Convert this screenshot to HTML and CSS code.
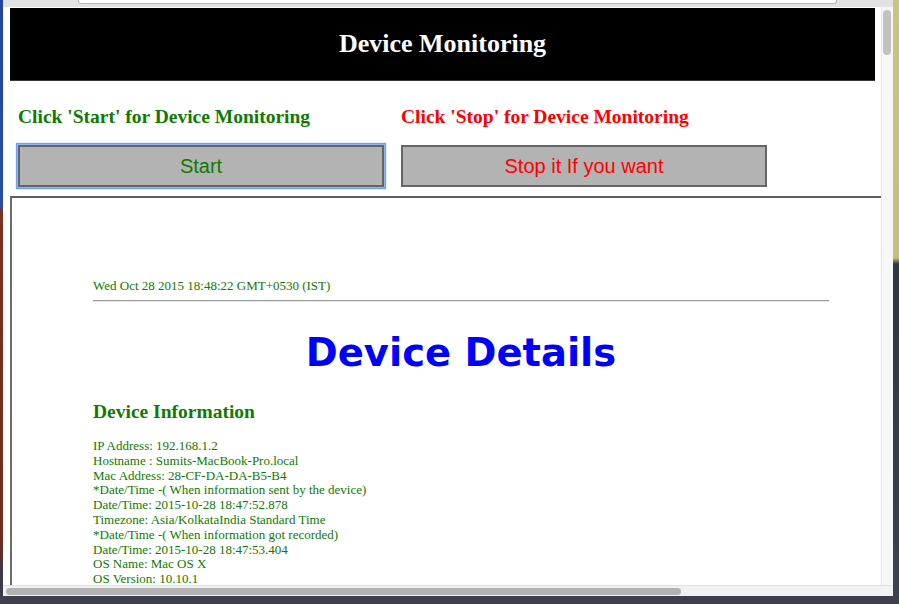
FILE: index.html
```html
<!DOCTYPE html>
<html>
<head>
<meta charset="utf-8">
<title>Device Monitoring</title>
<link rel="stylesheet" href="styles.css">
</head>
<body>
<div class="desktop">
  <div class="strip-left"></div>
  <div class="window">
    <div class="toolbar"><div class="urlbar"></div></div>
    <div class="content-row">
      <div class="viewport">
        <header class="banner"><h1 class="banner-title">Device Monitoring</h1></header>
        <div class="controls">
          <div class="col">
            <h3 class="label label-start">Click 'Start' for Device Monitoring</h3>
            <button class="btn btn-start">Start</button>
          </div>
          <div class="col">
            <h3 class="label label-stop">Click 'Stop' for Device Monitoring</h3>
            <button class="btn btn-stop">Stop it If you want</button>
          </div>
        </div>
        <div class="frame">
          <div class="frame-body">
            <div class="stamp">Wed Oct 28 2015 18:48:22 GMT+0530 (IST)</div>
            <hr class="rule">
            <h1 class="details-title">Device Details</h1>
            <h3 class="info-title">Device Information</h3>
            <div class="info">
              <div>IP Address: 192.168.1.2</div>
              <div>Hostname : Sumits-MacBook-Pro.local</div>
              <div>Mac Address: 28-CF-DA-DA-B5-B4</div>
              <div>*Date/Time -( When information sent by the device)</div>
              <div>Date/Time: 2015-10-28 18:47:52.878</div>
              <div>Timezone: Asia/KolkataIndia Standard Time</div>
              <div>*Date/Time -( When information got recorded)</div>
              <div>Date/Time: 2015-10-28 18:47:53.404</div>
              <div>OS Name: Mac OS X</div>
              <div>OS Version: 10.10.1</div>
            </div>
          </div>
        </div>
      </div>
      <div class="vscroll"><div class="vthumb"></div></div>
    </div>
    <div class="hscroll"><div class="hthumb"></div><div class="corner"></div></div>
  </div>
  <div class="strip-right"></div>
  <div class="dock"></div>
</div>
</body>
</html>
```

FILE: styles.css
```css
* { box-sizing: border-box; }
html, body { margin: 0; padding: 0; }
body {
  width: 899px;
  height: 604px;
  overflow: hidden;
  background: #3b3f4d;
  font-family: "Liberation Serif", "Times New Roman", serif;
}
.desktop {
  display: grid;
  grid-template-columns: 3px 890px 6px;
  grid-template-rows: 596px 8px;
  width: 899px;
  height: 604px;
}
.strip-left {
  background: linear-gradient(to bottom, #2344a0 0, #2a4ca8 205px, #7a3222 212px, #6e2c1f 540px, #3a3a48 575px);
}
.strip-right {
  background: linear-gradient(to bottom, #cbc47c 0, #c6bf74 258px, #2f3644 264px, #3b4354 600px);
}
.dock {
  grid-column: 1 / 4;
  background: #3c404e;
}
.window {
  display: flex;
  flex-direction: column;
  background: #fff;
  overflow: hidden;
}
.toolbar {
  height: 7px;
  background: #e2e2e2;
  padding-left: 75px;
  flex: none;
}
.urlbar {
  width: 759px;
  height: 4px;
  background: #fff;
  border: 1px solid #b9b9b9;
  border-top: none;
  border-radius: 0 0 3px 3px;
}
.content-row {
  flex: 1;
  display: flex;
  min-height: 0;
}
.viewport {
  width: 878px;
  flex: none;
  overflow: hidden;
  padding: 1px 0 0 7px;
  background: #fff;
}
.banner {
  width: 865px;
  height: 73px;
  background: #000;
  border-bottom: 1px solid #3a3a3a;
  display: flex;
  align-items: center;
  justify-content: center;
}
.banner-title {
  margin: 0;
  color: #fff;
  font-size: 26px;
  font-weight: bold;
  line-height: 30px;
}
.controls {
  display: flex;
  gap: 17px;
  padding: 25px 0 0 8px;
}
.col {
  width: 366px;
  display: flex;
  flex-direction: column;
}
.label {
  margin: 0;
  font-size: 19.5px;
  line-height: 22px;
  font-weight: bold;
  white-space: nowrap;
}
.label-start { color: #107a00; }
.label-stop { color: #ff0000; }
.btn {
  margin-top: 17px;
  width: 366px;
  height: 42px;
  background: #b3b3b3;
  border: 2px solid #656565;
  font-family: "Liberation Sans", Arial, sans-serif;
  font-size: 20px;
  padding: 0;
}
.btn-start {
  color: #107a00;
  box-shadow: 0 0 0 1px #8fb7f5, 0 0 1px 2px #6aa0ee;
}
.btn-stop { color: #ff0000; }
.frame {
  margin-top: 9px;
  width: 900px;
  border-top: 2px solid #5e5e5e;
  border-left: 2px solid #6a6a6a;
  background: #fff;
}
.frame-body {
  padding: 80px 81px 0 81px;
  color: #107a00;
}
.stamp {
  font-size: 13px;
  line-height: 15px;
}
.rule {
  margin: 7px 0 0 0;
  border: none;
  border-top: 1px solid #9a9a9a;
  border-bottom: 1px solid #e6e6e6;
  height: 0;
}
.details-title {
  margin: 29px 0 0 0;
  text-align: center;
  color: #0000ff;
  font-family: "DejaVu Sans", Verdana, sans-serif;
  font-size: 38.5px;
  line-height: 44px;
  font-weight: bold;
}
.info-title {
  margin: 26px 0 0 0;
  font-size: 19.5px;
  line-height: 22px;
  font-weight: bold;
}
.info {
  margin-top: 16px;
  font-size: 13px;
  line-height: 14.8px;
}
.vscroll {
  flex: 1;
  background: #f7f7f7;
  border-left: 1px solid #e6e6e6;
  padding: 3px 0 0 1px;
}
.vthumb {
  width: 8px;
  height: 45px;
  border-radius: 4px;
  background: #c1c1c1;
}
.hscroll {
  height: 11px;
  flex: none;
  background: #f1f1f1;
  border-top: 1px solid #e2e2e2;
  display: flex;
  align-items: center;
  padding-left: 3px;
}
.hthumb {
  width: 675px;
  height: 7px;
  border-radius: 4px;
  background: #b2b2b2;
}
.corner {
  margin-left: auto;
  width: 12px;
  height: 10px;
  background: #f3f3f3;
}
```
